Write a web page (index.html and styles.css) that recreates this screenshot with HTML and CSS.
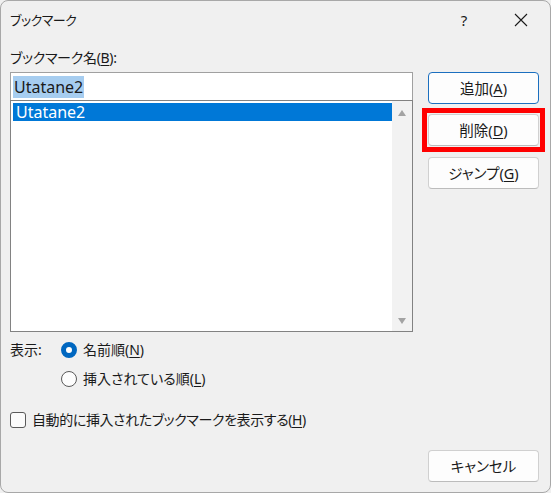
FILE: index.html
```html
<!DOCTYPE html>
<html lang="ja">
<head>
<meta charset="utf-8">
<link rel="stylesheet" href="styles.css">
</head>
<body>
<div class="dialog">
  <div class="titlebar">
    <div class="title">ブックマーク</div>
    <div class="tb-buttons">
      <div class="tb-btn help">?</div>
      <div class="tb-btn close">
        <svg width="14" height="14" viewBox="0 0 14 14"><path d="M1 1 L13 13 M13 1 L1 13" stroke="#1a1a1a" stroke-width="1.1" fill="none"/></svg>
      </div>
    </div>
  </div>
  <div class="content">
    <div class="label">ブックマーク名(<u>B</u>):</div>
    <div class="main">
      <div class="left">
        <div class="name-input"><span class="sel">Utatane2</span></div>
        <div class="listbox">
          <div class="items">
            <div class="item selected">Utatane2</div>
          </div>
          <div class="scrollbar">
            <svg class="arrow" width="8" height="6" viewBox="0 0 8 6"><path d="M4 0 L8 6 L0 6 Z" fill="#a3a3a3"/></svg>
            <svg class="arrow" width="8" height="6" viewBox="0 0 8 6"><path d="M0 0 L8 0 L4 6 Z" fill="#a3a3a3"/></svg>
          </div>
        </div>
      </div>
      <div class="right">
        <div class="btn default">追加(<u>A</u>)</div>
        <div class="btn marked">削除(<u>D</u>)</div>
        <div class="btn jump">ジャンプ(<u>G</u>)</div>
      </div>
    </div>
    <div class="row display-row">
      <span class="disp-label">表示:</span>
      <span class="radio checked"></span>
      <span class="opt">名前順(<u>N</u>)</span>
    </div>
    <div class="row radio-row2">
      <span class="radio"></span>
      <span class="opt">挿入されている順(<u>L</u>)</span>
    </div>
    <div class="row check-row">
      <span class="checkbox"></span>
      <span class="opt check-label">自動的に挿入されたブックマークを表示する(<u>H</u>)</span>
    </div>
    <div class="footer">
      <div class="btn">キャンセル</div>
    </div>
  </div>
</div>
</body>
</html>
```
FILE: styles.css
```css
html, body {
  margin: 0;
  padding: 0;
  background: #f0f0f0;
}
body {
  font-family: "Noto Sans", "Noto Sans CJK JP", sans-serif;
  font-size: 14px;
  color: #1a1a1a;
  font-feature-settings: "palt";
}
u {
  text-decoration: underline;
  text-underline-offset: 2px;
  text-decoration-thickness: 1px;
}
.dialog {
  width: 551px;
  height: 493px;
  box-sizing: border-box;
  border: 1px solid #a8a8a8;
  border-radius: 8px;
  background: #f0f0f0;
  display: flex;
  flex-direction: column;
  overflow: hidden;
}
.titlebar {
  height: 37px;
  display: flex;
  align-items: center;
  justify-content: space-between;
  padding-left: 9px;
}
.title {
  font-size: 13px;
  line-height: 20px;
  letter-spacing: -0.5px;
}
.tb-buttons {
  display: flex;
  align-items: center;
  height: 100%;
}
.tb-btn {
  height: 100%;
  display: flex;
  align-items: center;
  justify-content: center;
}
.help {
  font-size: 15px;
  width: 56px;
}
.close {
  width: 58px;
}
.content {
  padding: 0 0 0 9px;
  display: flex;
  flex-direction: column;
}
.label {
  margin-top: 10px;
  height: 20px;
  line-height: 20px;
  letter-spacing: -0.3px;
}
.main {
  margin-top: 4px;
  display: flex;
  gap: 15px;
}
.left {
  width: 403px;
  display: flex;
  flex-direction: column;
}
.name-input {
  height: 28px;
  box-sizing: border-box;
  background: #fff;
  border: 1px solid #a0a0a0;
  border-bottom: none;
  padding: 3px 2px 0 2px;
  font-size: 16px;
  line-height: 22px;
}
.sel {
  background: #a6cdf0;
  padding: 0 1px;
  display: inline-block;
}
.listbox {
  height: 232px;
  box-sizing: border-box;
  border: 1px solid #828282;
  background: #fff;
  display: flex;
}
.items {
  flex: 1;
  padding: 2px 0 0 2px;
}
.item {
  height: 18px;
  line-height: 18px;
  font-size: 16px;
  padding-left: 3px;
}
.item.selected {
  background: #0078d7;
  color: #fff;
}
.scrollbar {
  width: 20px;
  background: #f2f2f2;
  display: flex;
  flex-direction: column;
  justify-content: space-between;
  align-items: center;
  padding: 9px 0 7px 0;
}
.arrow {
  display: block;
}
.right {
  width: 111px;
  display: flex;
  flex-direction: column;
}
.btn {
  width: 111px;
  height: 32px;
  box-sizing: border-box;
  border: 1px solid #d0d0d0;
  border-bottom-color: #bcbcbc;
  border-radius: 4px;
  background: #fdfdfd;
  display: flex;
  align-items: center;
  justify-content: center;
  line-height: 20px;
  font-size: 14.5px;
}
.btn.default {
  border: 1px solid #1b6fbf;
}
.btn.marked {
  margin-top: 10px;
  position: relative;
}
.btn.marked::after {
  content: "";
  position: absolute;
  left: -7px;
  right: -7px;
  top: -7px;
  bottom: -7px;
  border: 5px solid #ff0000;
}
.btn.jump {
  margin-top: 11px;
}
.row {
  display: flex;
  align-items: center;
  height: 20px;
  line-height: 20px;
}
.display-row {
  margin-top: 8px;
}
.disp-label {
  width: 51px;
}
.radio {
  width: 16px;
  height: 16px;
  box-sizing: border-box;
  border-radius: 50%;
  border: 1px solid #5a5a5a;
  background: #fdfdfd;
  margin-right: 6px;
}
.radio.checked {
  border: 5px solid #0067c0;
  background: #fff;
}
.radio-row2 {
  margin-top: 9px;
  padding-left: 51px;
}
.check-row {
  margin-top: 21px;
}
.checkbox {
  width: 16px;
  height: 16px;
  box-sizing: border-box;
  border: 1px solid #5a5a5a;
  border-radius: 3px;
  background: #fbfbfb;
  margin-right: 6px;
}
.check-label {
  letter-spacing: -0.4px;
}
.footer {
  margin-top: 20px;
  display: flex;
  padding-left: 418px;
}
```
